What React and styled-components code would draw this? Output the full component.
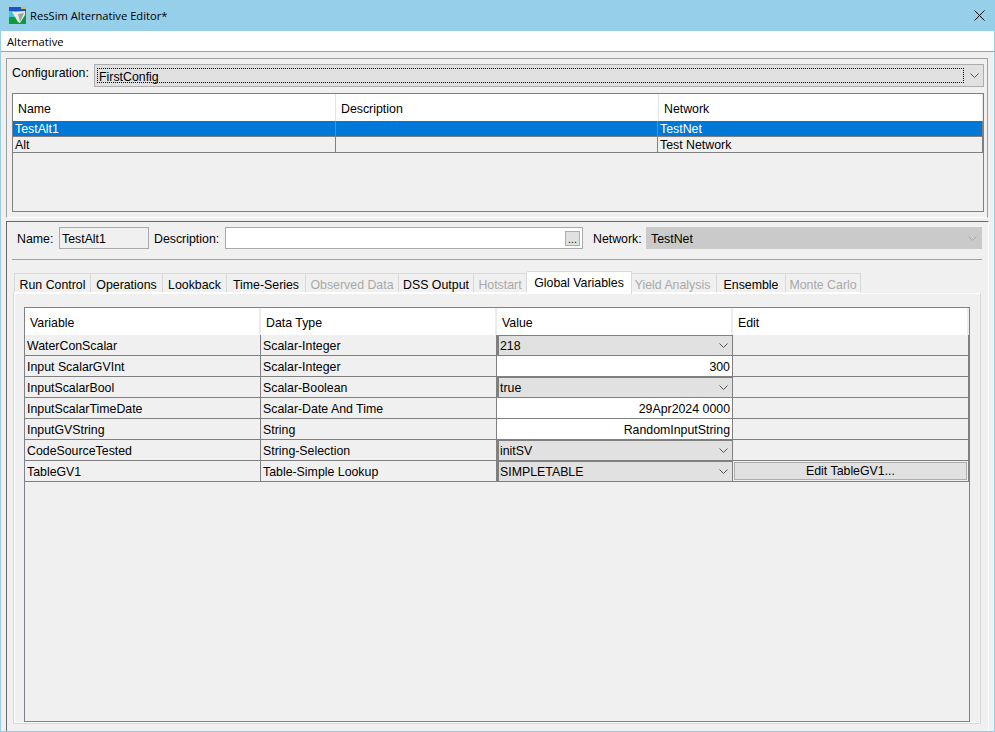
import React from "react";
import styled, { createGlobalStyle } from "styled-components";

const GlobalStyle = createGlobalStyle`
  html, body {
    margin: 0;
    padding: 0;
    background: #f0f0f0;
  }
  * {
    box-sizing: border-box;
  }
  body {
    font-family: "Liberation Sans", Arial, sans-serif;
    font-size: 12.35px;
    color: #000;
  }
`;

const Window = styled.div`
  width: 995px;
  height: 732px;
  display: flex;
  flex-direction: column;
  overflow: hidden;
  background: #f0f0f0;
  border: 1px solid #96cfe9;
  border-top: 0;
`;

const TitleBar = styled.div`
  height: 31px;
  flex: none;
  margin: 0 -1px;
  padding: 0 10px 0 9px;
  display: flex;
  align-items: center;
  background: #96cfe9;
`;

const TitleText = styled.div`
  margin-left: 4px;
  flex: 1;
  font-family: "Open Sans", sans-serif;
  font-size: 11.2px;
  color: #000;
`;

const MenuBar = styled.div`
  height: 21px;
  flex: none;
  padding: 1px 0 0 6px;
  display: flex;
  align-items: center;
  background: #fff;
  border-bottom: 1px solid #a0a0a0;
  font-family: "Open Sans", sans-serif;
  font-size: 11.2px;
`;

const Body = styled.div`
  flex: 1;
  min-height: 0;
  padding: 6px 5px 0 5px;
  display: flex;
  flex-direction: column;
`;

const TopPanel = styled.div`
  height: 160px;
  flex: none;
  padding: 5px 3px 0 5px;
  border: 1px solid #a0a0a0;
  border-bottom: 1px solid #fff;
  margin-right: 1px;
`;

const ConfigRow = styled.div`
  height: 23px;
  display: flex;
  align-items: center;
`;

const ConfigLabel = styled.div`
  width: 82px;
  padding-bottom: 6px;
`;

const ComboBox = styled.div`
  flex: 1;
  height: 23px;
  padding: 3px 4px 3px 2px;
  display: flex;
  align-items: center;
  background: #e1e1e1;
  border: 1px solid #adadad;
`;

const FocusBox = styled.div`
  flex: 1;
  height: 100%;
  margin-right: 6px;
  padding: 2px 0 0 1px;
  display: flex;
  align-items: center;
  border: 1px dotted #000;
`;

const Arrow = styled.svg`
  flex: none;
  display: block;
  width: 9px;
  height: 5px;
`;

const Chevron = ({ color = "#555" }) => (
  <Arrow viewBox="0 0 9 5">
    <path d="M0.5 0.5 L4.5 4.5 L8.5 0.5" fill="none" stroke={color} strokeWidth="1" />
  </Arrow>
);

const AltTable = styled.div`
  height: 119px;
  margin-top: 6px;
  border: 1px solid #808080;
`;

const AltHeader = styled.div`
  height: 27px;
  display: grid;
  grid-template-columns: 323px 323px 1fr;
  background: #fff;
`;

const AltHeaderCell = styled.div`
  padding: 2px 0 0 5px;
  display: flex;
  align-items: center;
  border-right: 1px solid #e3e3e3;
`;

const AltRow = styled.div`
  height: 16px;
  display: grid;
  grid-template-columns: 323px 322px 1fr;
  background: ${(p) => (p.$selected ? "#0078d7" : "#f0f0f0")};
  color: ${(p) => (p.$selected ? "#fff" : "#000")};
  border-bottom: 1px solid #808080;
`;

const AltCell = styled.div`
  padding-left: 2px;
  display: flex;
  align-items: center;
  border-right: 1px solid #808080;
`;

const Divider = styled.div`
  height: 3px;
  flex: none;
`;

const BottomPanel = styled.div`
  flex: 1;
  min-height: 0;
  padding: 5px 6px 7px 5px;
  display: flex;
  flex-direction: column;
  border-top: 1px solid #696969;
  border-left: 1px solid #696969;
  border-right: 1px solid #fff;
`;

const NameRow = styled.div`
  height: 22px;
  flex: none;
  display: flex;
  align-items: center;
`;

const FieldLabel = styled.div`
  width: ${(p) => p.$width}px;
  margin-left: ${(p) => p.$left}px;
  padding-top: 1px;
  flex: none;
`;

const NameField = styled.div`
  width: 90px;
  height: 22px;
  padding: 1px 0 0 2px;
  display: flex;
  align-items: center;
  background: #f0f0f0;
  border: 1px solid #a9a9a9;
`;

const DescriptionField = styled.div`
  width: 358px;
  height: 22px;
  padding-right: 2px;
  display: flex;
  align-items: center;
  justify-content: flex-end;
  background: #fff;
  border: 1px solid #a9a9a9;
`;

const DotsButton = styled.div`
  width: 15px;
  height: 15px;
  display: flex;
  align-items: flex-end;
  justify-content: center;
  background: #e1e1e1;
  border: 1px solid #adadad;
  font-size: 11px;
  line-height: 12px;
`;

const NetworkCombo = styled.div`
  flex: 1;
  height: 22px;
  padding: 1px 5px 0 5px;
  display: flex;
  align-items: center;
  justify-content: space-between;
  background: #cacaca;
`;

const Rule = styled.div`
  height: 1px;
  flex: none;
  margin-top: 10px;
  background: #a0a0a0;
`;

const TabBar = styled.div`
  height: 33px;
  flex: none;
  margin-left: 2px;
  padding-top: 11px;
  display: flex;
  align-items: flex-end;
`;

const Tab = styled.div`
  width: ${(p) => p.$width}px;
  height: ${(p) => (p.$active ? 23 : 20)}px;
  padding-top: ${(p) => (p.$active ? 0 : 3)}px;
  padding-bottom: ${(p) => (p.$active ? 1 : 0)}px;
  padding-right: ${(p) => p.$nudge || 0}px;
  margin-bottom: ${(p) => (p.$active ? -1 : 0)}px;
  display: flex;
  align-items: center;
  justify-content: center;
  white-space: nowrap;
  position: relative;
  background: ${(p) => (p.$active ? "#fff" : "#f0f0f0")};
  color: ${(p) => (p.$disabled ? "#a9a9a9" : "#000")};
  border: 1px solid #d9d9d9;
  border-left: ${(p) => (p.$first ? "1px solid #d9d9d9" : "0")};
  border-bottom: ${(p) => (p.$active ? "0" : "1px solid #fff")};
`;

const TabPane = styled.div`
  flex: 1;
  min-height: 0;
  margin: 0 1px 0 1px;
  padding: 14px 10px 1px 10px;
  display: flex;
  border: 1px solid #d9d9d9;
  border-top: 0;
  box-shadow: inset 1px 1px 0 #fff, inset 0 -1px 0 #fff;
`;

const VarTable = styled.div`
  flex: 1;
  border: 1px solid #808088;
  background: #f0f0f0;
`;

const VarHeader = styled.div`
  height: 27px;
  display: grid;
  grid-template-columns: repeat(3, 236px) 1fr;
  background: #fff;
`;

const VarHeaderCell = styled.div`
  padding: 2px 0 0 5px;
  display: flex;
  align-items: center;
  border-right: 2px solid #ececec;
`;

const VarRow = styled.div`
  height: 21px;
  display: grid;
  grid-template-columns: repeat(3, 236px) 1fr;
  border-bottom: 1px solid #808080;
`;

const VarCell = styled.div`
  padding: 1px 0 0 2px;
  display: flex;
  align-items: center;
  border-right: 1px solid #808080;
`;

const ValueText = styled.div`
  padding: 1px 2px 0 0;
  display: flex;
  align-items: center;
  justify-content: flex-end;
  background: #fff;
  border-right: 1px solid #808080;
`;

const ValueCombo = styled.div`
  padding: 0 4px 0 1px;
  display: flex;
  align-items: center;
  justify-content: space-between;
  background: #e1e1e1;
  border: 2px solid #808080;
  border-width: 1px 1px 1px 2px;
  margin-bottom: -1px;
`;

const EditCell = styled.div`
  padding: 1px;
  display: flex;
  border-right: 1px solid #808080;
`;

const EditButton = styled.div`
  flex: 1;
  display: flex;
  align-items: center;
  justify-content: center;
  background: #e1e1e1;
  border: 1px solid #adadad;
`;

const AppIcon = () => (
  <svg width="17" height="17" viewBox="0 0 17 17" style={{ flex: "none" }}>
    <rect width="17" height="17" fill="#0f9a3c" />
    <rect width="17" height="4" fill="#1c54c8" />
    <rect x="12" y="0" width="5" height="2" fill="#d8c040" />
    <rect x="0" y="4" width="6" height="6" fill="#35c9d8" />
    <path d="M3 5 L16 4 L16 8 L11 16 L9 15 Z" fill="#e8ebe8" />
    <path d="M9 7 L15 6 L11 15 Z" fill="#9aa49c" />
  </svg>
);

const tabs = [
  { label: "Run Control", width: 77, first: true },
  { label: "Operations", width: 72 },
  { label: "Lookback", width: 64 },
  { label: "Time-Series", width: 79 },
  { label: "Observed Data", width: 93, disabled: true },
  { label: "DSS Output", width: 75 },
  { label: "Hotstart", width: 53, disabled: true },
  { label: "Global Variables", width: 105, active: true },
  { label: "Yield Analysis", width: 85, disabled: true, nudge: 3 },
  { label: "Ensemble", width: 69 },
  { label: "Monte Carlo", width: 75, disabled: true },
];

const variables = [
  { name: "WaterConScalar", type: "Scalar-Integer", combo: "218" },
  { name: "Input ScalarGVInt", type: "Scalar-Integer", text: "300" },
  { name: "InputScalarBool", type: "Scalar-Boolean", combo: "true" },
  { name: "InputScalarTimeDate", type: "Scalar-Date And Time", text: "29Apr2024 0000" },
  { name: "InputGVString", type: "String", text: "RandomInputString" },
  { name: "CodeSourceTested", type: "String-Selection", combo: "initSV" },
  { name: "TableGV1", type: "Table-Simple Lookup", combo: "SIMPLETABLE", edit: "Edit TableGV1..." },
];

const App = () => {
  return (
    <Window>
      <GlobalStyle />
      <TitleBar>
        <AppIcon />
        <TitleText>ResSim Alternative Editor*</TitleText>
        <svg width="11" height="11" viewBox="0 0 11 11">
          <path d="M0.5 0.5 L10.5 10.5 M10.5 0.5 L0.5 10.5" stroke="#000" strokeWidth="1" />
        </svg>
      </TitleBar>
      <MenuBar>Alternative</MenuBar>
      <Body>
        <TopPanel>
          <ConfigRow>
            <ConfigLabel>Configuration:</ConfigLabel>
            <ComboBox>
              <FocusBox>FirstConfig</FocusBox>
              <Chevron />
            </ComboBox>
          </ConfigRow>
          <AltTable>
            <AltHeader>
              <AltHeaderCell>Name</AltHeaderCell>
              <AltHeaderCell>Description</AltHeaderCell>
              <AltHeaderCell>Network</AltHeaderCell>
            </AltHeader>
            <AltRow $selected>
              <AltCell>TestAlt1</AltCell>
              <AltCell />
              <AltCell>TestNet</AltCell>
            </AltRow>
            <AltRow>
              <AltCell>Alt</AltCell>
              <AltCell />
              <AltCell>Test Network</AltCell>
            </AltRow>
          </AltTable>
        </TopPanel>
        <Divider />
        <BottomPanel>
          <NameRow>
            <FieldLabel $left={5} $width={42}>Name:</FieldLabel>
            <NameField>TestAlt1</NameField>
            <FieldLabel $left={5} $width={71}>Description:</FieldLabel>
            <DescriptionField>
              <DotsButton>...</DotsButton>
            </DescriptionField>
            <FieldLabel $left={10} $width={53}>Network:</FieldLabel>
            <NetworkCombo>
              TestNet
              <Chevron color="#a8a8a8" />
            </NetworkCombo>
          </NameRow>
          <Rule />
          <TabBar>
            {tabs.map((t) => (
              <Tab
                key={t.label}
                $width={t.width}
                $first={t.first}
                $active={t.active}
                $disabled={t.disabled}
                $nudge={t.nudge}
              >
                {t.label}
              </Tab>
            ))}
          </TabBar>
          <TabPane>
            <VarTable>
              <VarHeader>
                <VarHeaderCell>Variable</VarHeaderCell>
                <VarHeaderCell>Data Type</VarHeaderCell>
                <VarHeaderCell>Value</VarHeaderCell>
                <VarHeaderCell>Edit</VarHeaderCell>
              </VarHeader>
              {variables.map((v) => (
                <VarRow key={v.name}>
                  <VarCell>{v.name}</VarCell>
                  <VarCell>{v.type}</VarCell>
                  {v.combo ? (
                    <ValueCombo>
                      {v.combo}
                      <Chevron />
                    </ValueCombo>
                  ) : (
                    <ValueText>{v.text}</ValueText>
                  )}
                  {v.edit ? (
                    <EditCell>
                      <EditButton>{v.edit}</EditButton>
                    </EditCell>
                  ) : (
                    <VarCell />
                  )}
                </VarRow>
              ))}
            </VarTable>
          </TabPane>
        </BottomPanel>
      </Body>
    </Window>
  );
};

export default App;
